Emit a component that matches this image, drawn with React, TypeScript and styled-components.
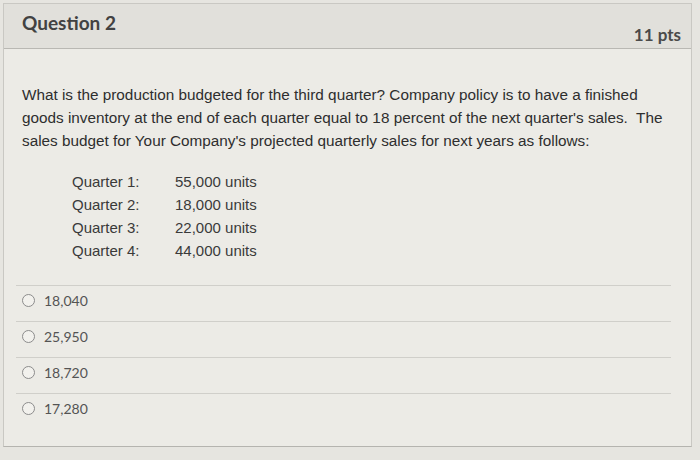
import React from "react";
import styled, { createGlobalStyle } from "styled-components";

const GlobalStyle = createGlobalStyle`
  body {
    margin: 0;
    background: #e6e5e0;
  }
`;

const Card = styled.div`
  margin: 3px 8px 0 3px;
  border: 1px solid #c9c8c3;
  border-bottom-color: #b5b4af;
  background: #ecebe6;
`;

const Header = styled.div`
  display: flex;
  justify-content: space-between;
  height: 44px;
  padding: 0 10px 0 18px;
  background: #e1e0db;
  border-bottom: 1px solid #b9b8b3;
  font-family: Lato, "Open Sans", sans-serif;
  font-weight: 700;
  color: #424242;
`;

const Title = styled.div`
  font-size: 19px;
  margin-top: 7px;
`;

const Points = styled.div`
  font-size: 17px;
  margin-top: 20px;
  color: #4a4a4a;
`;

const Body = styled.div`
  padding: 34px 20px 17px 18px;
`;

const Question = styled.p`
  margin: 0;
  font-family: "Liberation Sans", Arial, sans-serif;
  font-size: 15.3px;
  line-height: 23px;
  color: #2e2e2e;
`;

const SalesTable = styled.div`
  display: grid;
  grid-template-columns: 103px auto;
  margin: 18px 0 0 50px;
  font-family: "Liberation Sans", Arial, sans-serif;
  font-size: 15px;
  line-height: 23px;
  color: #3a3a3a;
`;

const Answers = styled.div`
  margin: 23px 0 0 -6px;
`;

const Answer = styled.label`
  display: flex;
  align-items: center;
  height: 36px;
  padding: 0 0 7px 6px;
  box-sizing: border-box;
  border-top: 1px solid #d0cfca;
  font-family: Lato, "Open Sans", sans-serif;
  font-size: 14px;
  color: #545454;
`;

const Radio = styled.span`
  width: 11px;
  height: 11px;
  border: 1px solid #8c8c8c;
  border-radius: 50%;
  margin-right: 9px;
  background: #f2f1ed;
`;

const quarters = [
  ["Quarter 1:", "55,000 units"],
  ["Quarter 2:", "18,000 units"],
  ["Quarter 3:", "22,000 units"],
  ["Quarter 4:", "44,000 units"],
];

const options = ["18,040", "25,950", "18,720", "17,280"];

const App = () => {
  return (
    <>
      <GlobalStyle />
      <Card>
        <Header>
          <Title>Question 2</Title>
          <Points>11 pts</Points>
        </Header>
        <Body>
          <Question>
            What is the production budgeted for the third quarter? Company
            policy is to have a finished goods inventory at the end of each
            quarter equal to 18 percent of the next quarter's sales.&nbsp; The
            sales budget for Your Company's projected quarterly sales for next
            years as follows:
          </Question>
          <SalesTable>
            {quarters.map(([label, value]) => (
              <React.Fragment key={label}>
                <span>{label}</span>
                <span>{value}</span>
              </React.Fragment>
            ))}
          </SalesTable>
          <Answers>
            {options.map((o) => (
              <Answer key={o}>
                <Radio />
                {o}
              </Answer>
            ))}
          </Answers>
        </Body>
      </Card>
    </>
  );
};

export default App;
